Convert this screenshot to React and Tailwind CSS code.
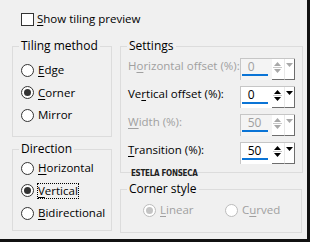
import React from 'react'

const FONT = { fontFamily: '"Open Sans", "Noto Sans", sans-serif' };

function Radio({ checked, disabled }) {
  return (
    <span className={`flex h-[13px] w-[13px] shrink-0 items-center justify-center rounded-full border bg-white ${disabled ? 'border-[#bcbcbc]' : 'border-[#333333]'}`}>
      {checked && <span className={`h-[7px] w-[7px] rounded-full ${disabled ? 'bg-[#c4c4c4]' : 'bg-[#333333]'}`} />}
    </span>
  );
}

function Label({ text, u, disabled, focus }) {
  const i = u ? text.indexOf(u) : -1;
  return (
    <span className={`${disabled ? 'text-[#a0a0a0]' : 'text-black'} ${focus ? 'outline outline-1 outline-dotted outline-black' : ''} whitespace-nowrap leading-[14px]`}>
      {i < 0 ? text : (
        <>
          {text.slice(0, i)}
          <span className="underline underline-offset-[2px]">{u}</span>
          {text.slice(i + 1)}
        </>
      )}
    </span>
  );
}

function RadioRow({ label, u, checked, disabled, focus }) {
  return (
    <div className="flex h-[22.5px] items-center gap-[4px] pl-[8px]">
      <Radio checked={checked} disabled={disabled} />
      <Label text={label} u={u} disabled={disabled} focus={focus} />
    </div>
  );
}

function Spin({ value, disabled }) {
  const c = disabled ? '#a8a8a8' : '#000000';
  return (
    <div className="flex h-[22px] w-[55px] border-l border-t border-[#c6c6c6] bg-white">
      <div className={`relative w-[31px] ${disabled ? 'bg-[#f4f4f4]' : 'bg-white'}`}>
        <span className={`absolute left-[7px] top-[1px] leading-[14px] text-[12px] ${disabled ? 'text-[#a0a0a0]' : 'text-black'}`}>{value}</span>
        <span className="absolute left-[1px] top-[15px] h-[2px] w-[26px] bg-[#0a74d6]" />
      </div>
      <div className="flex w-[12px] flex-col items-center border-b border-[#6d6d6d] pt-[3px]">
        <svg width="7" height="4" viewBox="0 0 7 4"><path d="M3.5 0L7 4H0z" fill={c} /></svg>
        <span className="my-[1px] h-px w-[9px] bg-[#c8c8c8]" />
        <svg width="7" height="4" viewBox="0 0 7 4"><path d="M0 0h7L3.5 4z" fill={c} /></svg>
      </div>
      <div className="flex w-[11px] justify-center border-b border-r border-l border-b-[#6d6d6d] border-r-[#6d6d6d] border-l-[#e8e8e8] pt-[4px]">
        <svg width="7" height="4" viewBox="0 0 7 4"><path d="M0 0h7L3.5 4z" fill={c} /></svg>
      </div>
    </div>
  );
}

function SpinRow({ label, u, value, disabled }) {
  return (
    <div className="flex h-[23px] items-start justify-between pl-[7px] pr-[7px]">
      <span className="-mt-px">
        <Label text={label} u={u} disabled={disabled} />
      </span>
      <Spin value={value} disabled={disabled} />
    </div>
  );
}

function Group({ title, className, children }) {
  return (
    <fieldset className={`box-border border border-[#dcdcdc] ${className}`}>
      <legend className="ml-[6px] px-[2px] text-[12px] leading-[14px] text-black">{title}</legend>
      {children}
    </fieldset>
  );
}

export default function App() {
  return (
    <div style={FONT} className="relative h-[242px] w-[310px] overflow-hidden border-b-[3px] border-r-[3px] border-[#111111] bg-[#f0f0f0] text-[11.5px]">
      <div className="mt-[12px] flex h-[14px] items-center gap-[3px] pl-[21px]">
        <span className="h-[13px] w-[13px] border border-[#333333] bg-white" />
        <Label text="Show tiling preview" u="S" />
      </div>

      <div className="mt-[13px] flex gap-[8px] pl-[12px]">
        <div className="flex w-[100px] flex-col">
          <Group title="Tiling method" className="h-[98px] pt-[6px]">
            <RadioRow label="Edge" u="E" />
            <RadioRow label="Corner" u="C" checked />
            <RadioRow label="Mirror" />
          </Group>
          <Group title="Direction" className="mt-[5px] h-[89px] pt-[1px]">
            <RadioRow label="Horizontal" u="H" />
            <RadioRow label="Vertical" u="V" checked focus />
            <RadioRow label="Bidirectional" u="B" />
          </Group>
        </div>

        <div className="relative flex w-[182px] flex-col">
          <Group title="Settings" className="h-[134px] pt-[5px]">
            <div className="flex flex-col gap-[5px]">
              <SpinRow label="Horizontal offset (%):" u="o" value="0" disabled />
              <SpinRow label="Vertical offset (%):" u="r" value="0" />
              <SpinRow label="Width (%):" u="W" value="50" disabled />
              <SpinRow label="Transition (%):" u="T" value="50" />
            </div>
          </Group>
          <span
            style={{ fontFamily: '"DejaVu Sans Condensed", "DejaVu Sans", sans-serif' }}
            className="absolute left-[11px] top-[130px] bg-[#f0f0f0] text-[8px] font-bold leading-[9px] tracking-[-0.3px] text-[#222222]"
          >
            ESTELA FONSECA
          </span>
          <Group title="Corner style" className="mt-[9px] h-[51px]">
            <div className="flex items-center pt-[7px]">
              <div className="flex w-[84px] items-center gap-[4px] pl-[22px]">
                <Radio checked disabled />
                <Label text="Linear" u="L" disabled />
              </div>
              <div className="flex items-center gap-[4px] pl-[20px]">
                <Radio disabled />
                <Label text="Curved" u="u" disabled />
              </div>
            </div>
          </Group>
        </div>
      </div>
    </div>
  )
}
